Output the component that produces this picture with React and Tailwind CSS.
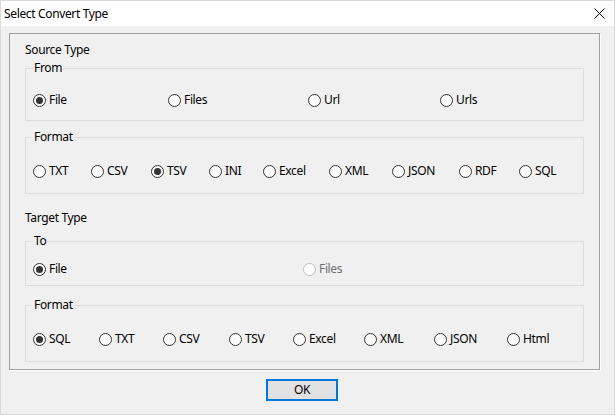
import React from "react";

const font = { fontFamily: '"Noto Sans", "Open Sans", sans-serif' };

function Radio({ label, checked, disabled, width }) {
  return (
    <div className="flex items-center h-[16px] shrink-0" style={width ? { width } : undefined}>
      <span
        className={
          "flex items-center justify-center w-[13px] h-[13px] rounded-full border bg-white " +
          (disabled ? "border-[#bcbcbc]" : "border-[#333333]")
        }
      >
        {checked ? <span className="w-[7px] h-[7px] rounded-full bg-[#333333]" /> : null}
      </span>
      <span className={"ml-[3px] whitespace-nowrap " + (disabled ? "text-[#6d6d6d]" : "text-black")}>{label}</span>
    </div>
  );
}

function Group({ title, className, rowClass, items }) {
  return (
    <fieldset className={"border border-[#dcdcdc] mx-[15px] px-[7px] " + className}>
      <legend className="px-[1px] leading-[16px] text-black">{title}</legend>
      <div className={"flex " + rowClass}>
        {items.map((it) => (
          <Radio key={it.label} {...it} />
        ))}
      </div>
    </fieldset>
  );
}

export default function App() {
  const from = [
    { label: "File", checked: true, width: 135 },
    { label: "Files", width: 140 },
    { label: "Url", width: 132 },
    { label: "Urls" },
  ];
  const srcFormat = [
    { label: "TXT", width: 58 },
    { label: "CSV", width: 60 },
    { label: "TSV", checked: true, width: 58 },
    { label: "INI", width: 54 },
    { label: "Excel", width: 66 },
    { label: "XML", width: 63 },
    { label: "JSON", width: 67 },
    { label: "RDF", width: 60 },
    { label: "SQL" },
  ];
  const to = [
    { label: "File", checked: true, width: 270 },
    { label: "Files", disabled: true },
  ];
  const dstFormat = [
    { label: "SQL", checked: true, width: 66 },
    { label: "TXT", width: 64 },
    { label: "CSV", width: 66 },
    { label: "TSV", width: 64 },
    { label: "Excel", width: 71 },
    { label: "XML", width: 70 },
    { label: "JSON", width: 73 },
    { label: "Html" },
  ];

  return (
    <div
      className="w-[615px] h-[415px] bg-[#f0f0f0] border border-[#dadada] text-[12px] leading-[16px] tracking-[-0.35px] text-black overflow-hidden"
      style={font}
    >
      <div className="h-[25px] bg-white flex items-center justify-between pl-[3px] pr-[9px]">
        <span>Select Convert Type</span>
        <svg width="11" height="11" viewBox="0 0 11 11">
          <path d="M0.5 0.5 L10.5 10.5 M10.5 0.5 L0.5 10.5" stroke="#000" strokeWidth="1" />
        </svg>
      </div>

      <div className="ml-[8px] mt-[7px] w-[591px] border border-[#a0a0a0] shadow-[1px_1px_0_#ffffff] pt-[8px] pb-[7px]">
        <div className="pl-[15px]">Source Type</div>
        <Group title="From" className="mt-[2px] pb-[12px]" rowClass="pt-[16px]" items={from} />
        <Group title="Format" className="mt-[8px] pb-[14px]" rowClass="pt-[18px]" items={srcFormat} />

        <div className="pl-[15px] mt-[16px]">Target Type</div>
        <Group title="To" className="mt-[7px] pb-[8px]" rowClass="pt-[12px]" items={to} />
        <Group title="Format" className="mt-[11px] pb-[14px]" rowClass="pt-[18px]" items={dstFormat} />
      </div>

      <div className="flex mt-[9px] ml-[265px]">
        <button className="w-[72px] h-[22px] border-2 border-[#0078d7] bg-[#e1e1e1] flex items-center justify-center leading-[16px]">
          OK
        </button>
      </div>
    </div>
  );
}
